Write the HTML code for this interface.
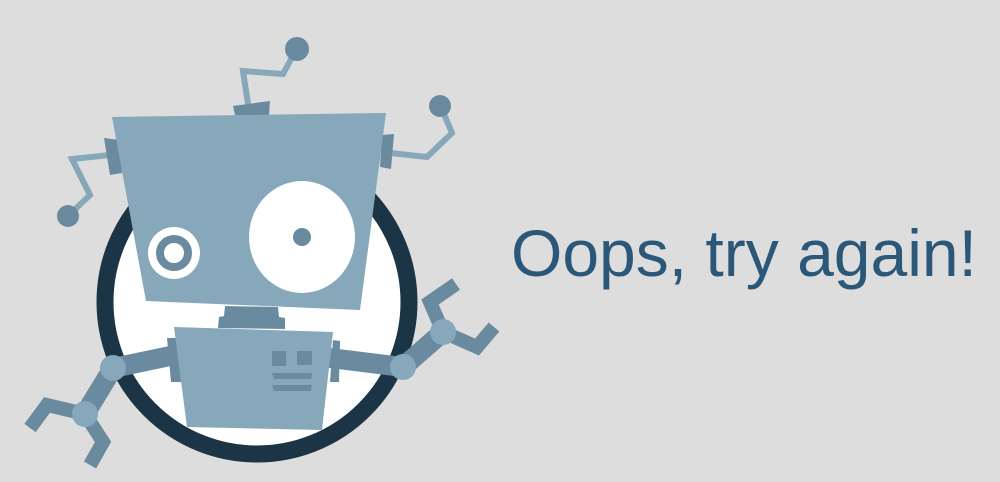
<!DOCTYPE html>
<html><head><meta charset="utf-8"><style>
html,body{margin:0;padding:0;background:#dddddd;width:1000px;height:482px;overflow:hidden}
svg{position:absolute;left:0;top:0}
.t{position:absolute;left:511px;top:216px;font-family:"Liberation Sans",sans-serif;font-size:66px;color:#2b5879;line-height:74px;white-space:nowrap}
</style></head><body>
<svg width="1000" height="482" viewBox="0 0 1000 482">
<circle cx="257" cy="302" r="152" fill="#fff" stroke="#1c3546" stroke-width="17"/>
<g fill="none" stroke="#87a7bb" stroke-width="6" stroke-linejoin="miter">
<polyline points="248,104 243,71 283,74 296,50"/>
<polyline points="110,155 72,159 90,195 68,216"/>
<polyline points="390,153 427,157 452,133 441,107"/>
</g>
<g fill="#6a8aa0">
<circle cx="297" cy="49" r="12"/>
<circle cx="68" cy="216" r="11"/>
<circle cx="440" cy="106" r="11"/>
<polygon points="233,106 270,101 269,115 235,115"/>
<polygon points="104,138 120,140 122,173 110,175"/>
<polygon points="382,135 394,134 391,169 380,167"/>
<polygon points="225,306 278,307 279,317 285,318 285,329 218,328 219,317 224,316"/>
<polygon points="167,338 182,338 182,382 171,382"/>
<polygon points="333,340 340,341 339,382 330,382"/>
</g>
<g fill="none" stroke="#6a8aa0" stroke-width="20">
<polyline points="175,355 113,368 85,414"/>
<polyline points="330,358 403,367 443,332"/>
</g>
<g fill="none" stroke="#6a8aa0" stroke-width="14" stroke-linejoin="miter">
<polyline points="85,414 47,405 30,428"/>
<polyline points="85,414 103,442 90,465"/>
<polyline points="443,332 430,302 456,284"/>
<polyline points="443,332 477,347 494,327"/>
</g>
<g fill="#87a7bb">
<circle cx="113" cy="368" r="13"/>
<circle cx="85" cy="414" r="13"/>
<circle cx="403" cy="367" r="13"/>
<circle cx="443" cy="332" r="13"/>
<polygon points="112,117 386,113 360,310 146,301"/>
<polygon points="174,327 333,332 322,430 187,427"/>
</g>
<ellipse cx="302" cy="237" rx="53" ry="56" fill="#fff"/>
<circle cx="302" cy="237" r="9" fill="#6a8aa0"/>
<circle cx="174" cy="253" r="26" fill="#fff"/>
<circle cx="174" cy="253" r="14" fill="none" stroke="#6a8aa0" stroke-width="8"/>
<g fill="#6a8aa0">
<rect x="272" y="351" width="14" height="15"/>
<rect x="297" y="351" width="15" height="14"/>
<polygon points="272,373 312,373 311,379 274,379"/>
<polygon points="272,385 312,385 311,391 274,391"/>
</g>
</svg>
<div class="t">Oops, try again!</div>
</body></html>
